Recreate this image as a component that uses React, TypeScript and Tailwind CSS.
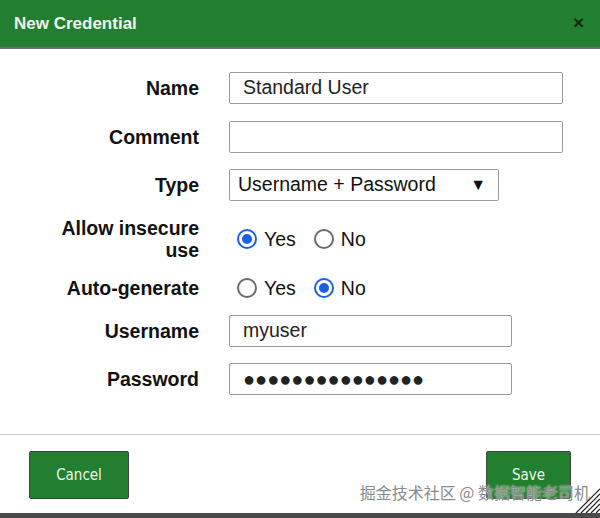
import React from "react"

const font = { fontFamily: '"Liberation Sans", Arial, sans-serif' }

function Radio({ checked, label }: { checked: boolean; label: string }) {
  return (
    <label className="flex items-center gap-[7px]">
      {checked ? (
        <span className="flex h-[20px] w-[20px] items-center justify-center rounded-full border-[2px] border-[#1a5fe6]">
          <span className="h-[10px] w-[10px] rounded-full bg-[#1a5fe6]" />
        </span>
      ) : (
        <span className="h-[20px] w-[20px] rounded-full border-[2px] border-[#6b6b6b]" />
      )}
      <span className="text-[19.5px] leading-[22px] text-[#111]">{label}</span>
    </label>
  )
}

function Row({ label, children, className = "" }: { label: React.ReactNode; children: React.ReactNode; className?: string }) {
  return (
    <div className={`flex items-center ${className}`}>
      <div className="w-[199px] shrink-0 text-right text-[19.5px] font-bold leading-[22px] text-[#111]">{label}</div>
      <div className="ml-[30px] flex items-center">{children}</div>
    </div>
  )
}

export default function App() {
  return (
    <div className="relative h-[518px] w-[600px] overflow-hidden bg-white" style={font}>
      {/* Cabeçalho */}
      <div className="flex h-[49px] items-center justify-between border-b-[2px] border-[#6f6f6f] bg-[#237f30] pl-[14px] pr-[16px]">
        <span className="text-[17px] font-bold text-[#eef6ee]">New Credential</span>
        <span className="text-[19px] font-bold text-[#0d2a10]">×</span>
      </div>

      {/* Formulário */}
      <div className="flex flex-col pt-[23px]">
        <Row label="Name">
          <div className="flex h-[32px] w-[334px] items-center rounded-[2px] border border-[#9a9a9a] px-[13px] text-[19.5px] text-[#222]">
            Standard User
          </div>
        </Row>
        <Row label="Comment" className="mt-[17px]">
          <div className="h-[32px] w-[334px] rounded-[2px] border border-[#9a9a9a]" />
        </Row>
        <Row label="Type" className="mt-[16px]">
          <div className="flex h-[32px] w-[270px] items-center justify-between rounded-[2px] border border-[#9a9a9a] pl-[8px] pr-[12px] text-[19.5px] text-[#111]">
            <span>Username + Password</span>
            <span className="text-[16px]">▼</span>
          </div>
        </Row>
        <Row
          label={
            <>
              Allow insecure
              <br />
              use
            </>
          }
          className="mt-[16px]"
        >
          <div className="flex items-center gap-[18px] pl-[8px]">
            <Radio checked label="Yes" />
            <Radio checked={false} label="No" />
          </div>
        </Row>
        <Row label="Auto-generate" className="mt-[16px]">
          <div className="flex items-center gap-[18px] pl-[8px]">
            <Radio checked={false} label="Yes" />
            <Radio checked label="No" />
          </div>
        </Row>
        <Row label="Username" className="mt-[16px]">
          <div className="flex h-[32px] w-[283px] items-center rounded-[2px] border border-[#9a9a9a] px-[13px] text-[19.5px] text-[#222]">
            myuser
          </div>
        </Row>
        <Row label="Password" className="mt-[16px]">
          <div className="flex h-[32px] w-[283px] items-center rounded-[2px] border border-[#9a9a9a] px-[13px] text-[20px] text-[#222]">
            ●●●●●●●●●●●●●●●
          </div>
        </Row>
      </div>

      {/* Rodapé */}
      <div className="mt-[39px] flex items-start justify-between border-t border-[#cfcfcf] px-[29px] pt-[16px]">
        <button
          className="h-[48px] w-[100px] rounded-[2px] border border-[#3c4a3e] bg-[#237f30] text-[15px] text-[#eef6ee]"
          style={{ fontFamily: '"DejaVu Sans Condensed", Lato, sans-serif' }}
        >
          Cancel
        </button>
        <button
          className="h-[48px] w-[85px] rounded-[2px] border border-[#3c4a3e] bg-[#237f30] text-[15px] text-[#eef6ee]"
          style={{ fontFamily: '"DejaVu Sans Condensed", Lato, sans-serif' }}
        >
          Save
        </button>
      </div>

      <div className="absolute bottom-0 left-0 h-[5px] w-full bg-[#4a4a4a]" />

      {/* Marca d'água */}
      <div
        className="absolute bottom-[14px] right-[10px] text-[16px] text-[#8a8a8a]"
        style={{ fontFamily: '"Noto Sans CJK SC", sans-serif', textShadow: "0 0 2px #fff" }}
      >
        掘金技术社区 @ 数据智能老司机
      </div>
      <svg className="absolute bottom-[5px] right-0" width="28" height="26" viewBox="0 0 28 26">
        {[0, 5, 10, 15, 20].map((o) => (
          <line key={o} x1={4 + o} y1={26} x2={28} y2={2 + o} stroke="#222" strokeWidth="1.2" />
        ))}
      </svg>
    </div>
  )
}
